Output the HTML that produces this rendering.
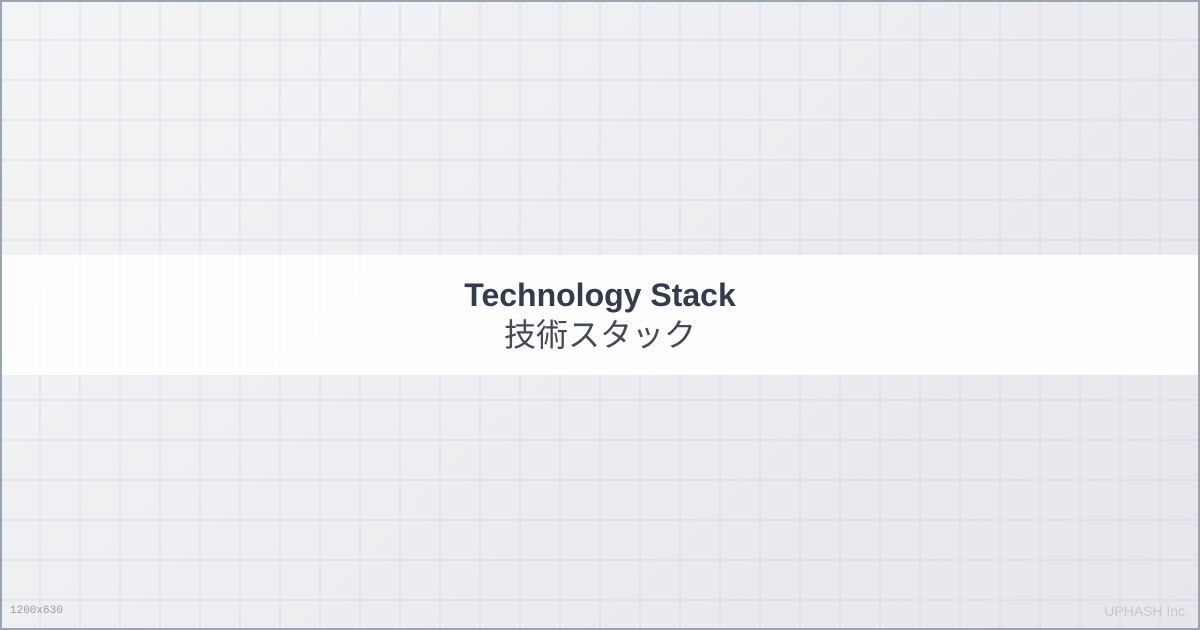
<!DOCTYPE html>
<html><head><meta charset="utf-8"><style>
html,body{margin:0;padding:0;}
body{width:1200px;height:630px;position:relative;overflow:hidden;
background:linear-gradient(135deg,#f3f4f6 0%,#e6e7eb 100%);
font-family:"Liberation Sans","Noto Sans CJK JP",sans-serif;}
.grid{position:absolute;inset:0;
background-image:linear-gradient(to right,rgba(205,210,224,0.3) 2px,transparent 2px),linear-gradient(to bottom,rgba(205,210,224,0.3) 2px,transparent 2px);
background-size:40px 40px;background-position:39px 39px;}
.border{position:absolute;inset:0;border:2px solid #9ea3b0;box-sizing:border-box;}
.band{position:absolute;left:0;right:0;top:255px;height:120px;background:rgba(255,255,255,0.88);}
.t1{position:absolute;left:0;right:0;top:275px;text-align:center;font-weight:bold;font-size:32px;color:#333b4c;line-height:40px;}
.t2{position:absolute;left:0;right:0;top:314px;text-align:center;font-size:32px;color:#454a56;line-height:42px;}
.l{position:absolute;left:10px;top:605px;font-family:"Liberation Mono","DejaVu Sans Mono",monospace;font-size:11px;color:#9a9ca3;}
.r{position:absolute;right:11px;top:603px;font-size:14px;color:#c6c8cd;}
</style></head><body>
<div class="grid"></div>
<div class="band"></div>
<div class="t1">Technology Stack</div>
<div class="t2">技術スタック</div>
<div class="l">1200x630</div>
<div class="r">UPHASH Inc.</div>
<div class="border"></div>
</body></html>
